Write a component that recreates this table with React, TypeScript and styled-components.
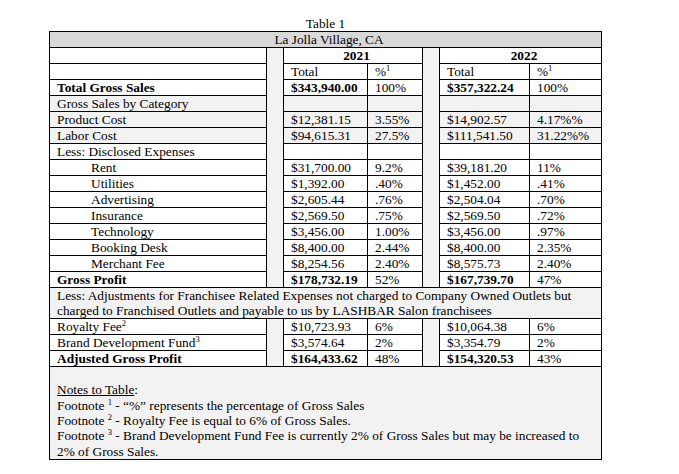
import React from "react";
import styled, { createGlobalStyle } from "styled-components";

const GlobalStyle = createGlobalStyle`
  html, body { margin: 0; padding: 0; background: #ffffff; }
  body { font-family: "Liberation Serif", "Times New Roman", serif; color: #000; }
`;

const Page = styled.div`
  padding: 16px 0 0 49px;
`;

const Table = styled.table`
  border-collapse: separate;
  border-spacing: 0;
  table-layout: fixed;
  width: 553px;
  border-left: 1px solid #000;
  border-top: 1px solid #000;
  font-family: "Liberation Serif", "Times New Roman", serif;
  font-size: 13.33px;
  color: #000;
`;

const Caption = styled.caption`
  caption-side: top;
  text-align: center;
  line-height: 15px;
  font-size: 13.33px;
`;

const Col = styled.col<{ $w: number }>`
  width: ${(p) => p.$w}px;
`;

type Shade = "none" | "light" | "dark";

const Cell = styled.td<{
  $bold?: boolean;
  $shade?: Shade;
  $indent?: boolean;
  $center?: boolean;
}>`
  border-right: 1px solid #000;
  border-bottom: 1px solid #000;
  padding: 0 0 0 ${(p) => (p.$indent ? 41 : 7)}px;
  line-height: 15px;
  height: 15px;
  white-space: nowrap;
  overflow: hidden;
  vertical-align: top;
  font-weight: ${(p) => (p.$bold ? 700 : 400)};
  text-align: ${(p) => (p.$center ? "center" : "left")};
  background: ${(p) =>
    p.$shade === "dark" ? "#d9d9d9" : p.$shade === "light" ? "#f2f2f2" : "#ffffff"};
`;

const Gap = styled.td`
  border-right: 1px solid #000;
  border-bottom: 1px solid #000;
  padding: 0;
  background: #f2f2f2;
`;

const WideCell = styled.td`
  border-right: 1px solid #000;
  border-bottom: 1px solid #000;
  padding: 0 7px;
  line-height: 15px;
  background: #f2f2f2;
  vertical-align: top;
`;

const NotesCell = styled.td`
  border-right: 1px solid #000;
  border-bottom: 1px solid #000;
  padding: 15.33px 7px 0;
  line-height: 15.33px;
  background: #f2f2f2;
  vertical-align: top;
`;

const NoteLine = styled.div`
  white-space: nowrap;
`;

const Underline = styled.span`
  text-decoration: underline;
`;

const Sup = styled.sup`
  font-size: 8.5px;
  line-height: 0;
  vertical-align: 5px;
`;

type Line = {
  label: React.ReactNode;
  a?: string;
  ap?: string;
  b?: string;
  bp?: string;
  bold?: boolean;
  indent?: boolean;
  shade?: Shade;
};

const topRows: Line[] = [
  { label: "Total Gross Sales", a: "$343,940.00", ap: "100%", b: "$357,322.24", bp: "100%", bold: true },
  { label: "Gross Sales by Category", shade: "light" },
  { label: "Product Cost", a: "$12,381.15", ap: "3.55%", b: "$14,902.57", bp: "4.17%%", shade: "light" },
  { label: "Labor Cost", a: "$94,615.31", ap: "27.5%", b: "$111,541.50", bp: "31.22%%", shade: "light" },
  { label: "Less: Disclosed Expenses" },
  { label: "Rent", a: "$31,700.00", ap: "9.2%", b: "$39,181.20", bp: "11%", indent: true },
  { label: "Utilities", a: "$1,392.00", ap: ".40%", b: "$1,452.00", bp: ".41%", indent: true },
  { label: "Advertising", a: "$2,605.44", ap: ".76%", b: "$2,504.04", bp: ".70%", indent: true },
  { label: "Insurance", a: "$2,569.50", ap: ".75%", b: "$2,569.50", bp: ".72%", indent: true },
  { label: "Technology", a: "$3,456.00", ap: "1.00%", b: "$3,456.00", bp: ".97%", indent: true },
  { label: "Booking Desk", a: "$8,400.00", ap: "2.44%", b: "$8,400.00", bp: "2.35%", indent: true },
  { label: "Merchant Fee", a: "$8,254.56", ap: "2.40%", b: "$8,575.73", bp: "2.40%", indent: true },
  { label: "Gross Profit", a: "$178,732.19", ap: "52%", b: "$167,739.70", bp: "47%", bold: true },
];

const bottomRows: Line[] = [
  { label: <>Royalty Fee<Sup>2</Sup></>, a: "$10,723.93", ap: "6%", b: "$10,064.38", bp: "6%" },
  { label: <>Brand Development Fund<Sup>3</Sup></>, a: "$3,574.64", ap: "2%", b: "$3,354.79", bp: "2%" },
  { label: "Adjusted Gross Profit", a: "$164,433.62", ap: "48%", b: "$154,320.53", bp: "43%", bold: true },
];

function DataRow({ row, gap }: { row: Line; gap?: React.ReactNode }) {
  return (
    <tr>
      <Cell $bold={row.bold} $indent={row.indent} $shade={row.shade}>
        {row.label}
      </Cell>
      {gap}
      <Cell $bold={row.bold} $shade={row.shade}>{row.a}</Cell>
      <Cell $shade={row.shade}>{row.ap}</Cell>
      {gap}
      <Cell $bold={row.bold} $shade={row.shade}>{row.b}</Cell>
      <Cell $shade={row.shade}>{row.bp}</Cell>
    </tr>
  );
}

export default function App() {
  return (
    <>
      <GlobalStyle />
      <Page>
        <Table>
          <Caption>Table 1</Caption>
          <colgroup>
            <Col $w={217} />
            <Col $w={17} />
            <Col $w={84} />
            <Col $w={55} />
            <Col $w={17} />
            <Col $w={90} />
            <Col $w={72} />
          </colgroup>
          <tbody>
            <tr>
              <Cell colSpan={7} $center $shade="dark">
                La Jolla Village, CA
              </Cell>
            </tr>
            <tr>
              <Cell />
              <Gap rowSpan={topRows.length + 2} />
              <Cell colSpan={2} $center $bold>2021</Cell>
              <Gap rowSpan={topRows.length + 2} />
              <Cell colSpan={2} $center $bold>2022</Cell>
            </tr>
            <tr>
              <Cell />
              <Cell>Total</Cell>
              <Cell>%<Sup>1</Sup></Cell>
              <Cell>Total</Cell>
              <Cell>%<Sup>1</Sup></Cell>
            </tr>
            {topRows.map((r, i) => (
              <DataRow key={i} row={r} />
            ))}
            <tr>
              <WideCell colSpan={7}>
                Less: Adjustments for Franchisee Related Expenses not charged to Company Owned Outlets but
                <br />
                charged to Franchised Outlets and payable to us by LASHBAR Salon franchisees
              </WideCell>
            </tr>
            {bottomRows.map((r, i) => (
              <tr key={i}>
                <Cell $bold={r.bold}>{r.label}</Cell>
                {i === 0 && <Gap rowSpan={bottomRows.length} />}
                <Cell $bold={r.bold}>{r.a}</Cell>
                <Cell>{r.ap}</Cell>
                {i === 0 && <Gap rowSpan={bottomRows.length} />}
                <Cell $bold={r.bold}>{r.b}</Cell>
                <Cell>{r.bp}</Cell>
              </tr>
            ))}
            <tr>
              <NotesCell colSpan={7}>
                <NoteLine>
                  <Underline>Notes to Table</Underline>:
                </NoteLine>
                <NoteLine>
                  Footnote <Sup>1</Sup> - “%” represents the percentage of Gross Sales
                </NoteLine>
                <NoteLine>
                  Footnote <Sup>2</Sup> - Royalty Fee is equal to 6% of Gross Sales.
                </NoteLine>
                <NoteLine>
                  Footnote <Sup>3</Sup> - Brand Development Fund Fee is currently 2% of Gross Sales but may be increased to
                </NoteLine>
                <NoteLine>2% of Gross Sales.</NoteLine>
              </NotesCell>
            </tr>
          </tbody>
        </Table>
      </Page>
    </>
  );
}
